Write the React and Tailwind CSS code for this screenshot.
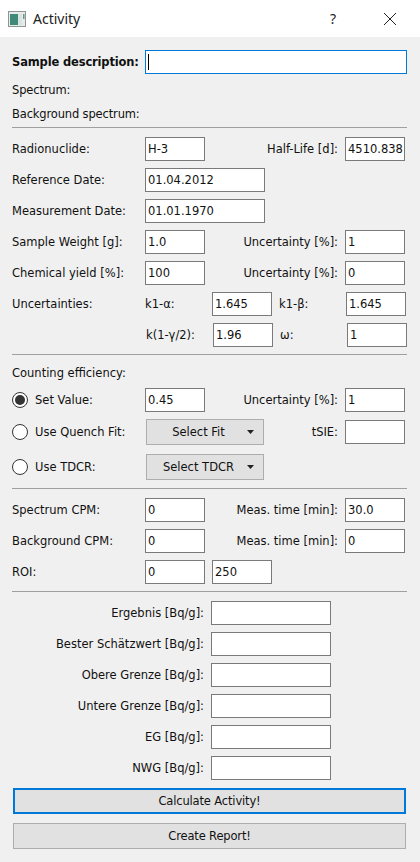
const font = { fontFamily: '"DejaVu Sans", sans-serif' };

function Field({ value = "", className = "w-[60px]", focus = false }) {
  return (
    <div className={`h-[24px] shrink-0 bg-white border flex items-center px-[2px] tracking-normal text-[#111] ${focus ? "border-[#0078d7]" : "border-[#7a7a7a] pt-[2px]"} ${className}`}>
      {value}
      {focus && <span className="w-px h-[16px] bg-black" />}
    </div>
  );
}

function Radio({ on }) {
  return (
    <span className="w-[16px] h-[16px] rounded-full border border-[#333] bg-white flex items-center justify-center shrink-0">
      {on && <span className="w-[10px] h-[10px] rounded-full bg-[#333]" />}
    </span>
  );
}

function Combo({ label }) {
  return (
    <div className="h-[26px] w-[118px] ml-[1px] shrink-0 bg-[#e1e1e1] border border-[#adadad] flex items-center">
      <span className="flex-1 text-center pl-[8px] pt-[2px]">{label}</span>
      <svg width="7" height="4" viewBox="0 0 7 4" className="mr-[9px] ml-[5px]"><path d="M0 0h7L3.5 4z" fill="#222" /></svg>
    </div>
  );
}

function Hr() {
  return <div className="h-px bg-[#a0a0a0] ml-[12px] mr-[13px]" />;
}

function Label({ children, className = "w-[133px]" }) {
  return <span className={`shrink-0 pt-[2px] ${className}`}>{children}</span>;
}

function PairRow({ label, value, right, rightValue }) {
  return (
    <div className="flex items-center h-[24px]">
      <Label>{label}</Label>
      <Field value={value} />
      <Label className="w-[140px] text-right pr-[7px]">{right}</Label>
      <Field value={rightValue} />
    </div>
  );
}

function ResultRow({ label }) {
  return (
    <div className="flex items-center h-[24px]">
      <Label className="w-[192px] text-right">{label}</Label>
      <Field className="w-[120px] ml-[7px]" />
    </div>
  );
}

export default function App() {
  return (
    <div style={font} className="w-[420px] h-[862px] bg-[#f0f0f0] text-[11.5px] text-[#111] overflow-hidden flex flex-col">
      <header className="h-[37px] bg-white flex items-center shrink-0">
        <svg width="18" height="16" viewBox="0 0 18 16" className="ml-[8px]">
          <rect x="0.5" y="0.5" width="17" height="15" fill="#e8eaea" stroke="#8f9696" />
          <rect x="2" y="3" width="8" height="11" fill="#3f8a78" />
          <rect x="10" y="3" width="4" height="11" fill="#dbe3e0" />
          <rect x="15" y="3" width="1.5" height="5" fill="#5f9a8c" />
        </svg>
        <span className="ml-[7px] text-[14px] text-[#222]" style={{ fontFamily: '"Noto Sans", sans-serif' }}>Activity</span>
        <span className="ml-auto text-[14px] text-[#222]" style={{ fontFamily: '"Noto Sans", sans-serif' }}>?</span>
        <svg width="14" height="14" viewBox="0 0 14 14" className="ml-[47px] mr-[23px]">
          <path d="M1 1l12 12M13 1L1 13" stroke="#222" strokeWidth="1" fill="none" />
        </svg>
      </header>

      <main className="flex flex-col pt-[13px]">
        <section className="pl-[12px] flex flex-col tracking-[-0.15px]">
          <div className="flex items-center h-[24px]">
            <Label className="w-[133px] font-bold whitespace-nowrap">Sample description:</Label>
            <Field focus className="w-[262px]" />
          </div>
          <div className="mt-[7px] h-[17px] flex items-center pt-[2px]">Spectrum:</div>
          <div className="mt-[7px] h-[17px] flex items-center pt-[2px]">Background spectrum:</div>
        </section>
        <div className="mt-[5px]"><Hr /></div>

        <section className="pl-[12px] pt-[9px] flex flex-col gap-[7px]">
          <PairRow label="Radionuclide:" value="H-3" right="Half-Life [d]:" rightValue="4510.838" />
          <div className="flex items-center h-[24px]"><Label>Reference Date:</Label><Field value="01.04.2012" className="w-[120px]" /></div>
          <div className="flex items-center h-[24px]"><Label>Measurement Date:</Label><Field value="01.01.1970" className="w-[120px]" /></div>
          <PairRow label="Sample Weight [g]:" value="1.0" right="Uncertainty [%]:" rightValue="1" />
          <PairRow label="Chemical yield [%]:" value="100" right="Uncertainty [%]:" rightValue="0" />
          <div className="flex items-center h-[24px]">
            <Label>Uncertainties:</Label>
            <Label className="w-[67px]">k1-α:</Label>
            <Field value="1.645" />
            <Label className="w-[74px] pl-[7px]">k1-β:</Label>
            <Field value="1.645" />
          </div>
          <div className="flex items-center h-[24px]">
            <Label>{""}</Label>
            <Label className="w-[68px] pl-[1px] whitespace-nowrap">k(1-γ/2):</Label>
            <Field value="1.96" />
            <Label className="w-[74px] pl-[7px]">ω:</Label>
            <Field value="1" />
          </div>
        </section>
        <div className="mt-[7px]"><Hr /></div>

        <section className="pl-[12px] flex flex-col">
          <div className="mt-[9px] h-[17px] flex items-center pt-[2px]">Counting efficiency:</div>
          <div className="mt-[7px] flex items-center h-[24px]">
            <Radio on />
            <Label className="w-[117px] pl-[7px]">Set Value:</Label>
            <Field value="0.45" />
            <Label className="w-[140px] text-right pr-[7px]">Uncertainty [%]:</Label>
            <Field value="1" />
          </div>
          <div className="mt-[7px] flex items-center h-[26px]">
            <Radio />
            <Label className="w-[117px] pl-[7px]">Use Quench Fit:</Label>
            <Combo label="Select Fit" />
            <Label className="w-[81px] text-right pr-[7px]">tSIE:</Label>
            <Field />
          </div>
          <div className="mt-[9px] flex items-center h-[26px]">
            <Radio />
            <Label className="w-[117px] pl-[7px]">Use TDCR:</Label>
            <Combo label="Select TDCR" />
          </div>
        </section>
        <div className="mt-[8px]"><Hr /></div>

        <section className="pl-[12px] pt-[9px] flex flex-col gap-[7px]">
          <PairRow label="Spectrum CPM:" value="0" right="Meas. time [min]:" rightValue="30.0" />
          <PairRow label="Background CPM:" value="0" right="Meas. time [min]:" rightValue="0" />
          <div className="flex items-center h-[24px] gap-[7px]">
            <Label className="w-[126px]">ROI:</Label>
            <Field value="0" />
            <Field value="250" />
          </div>
        </section>
        <div className="mt-[7px]"><Hr /></div>

        <section className="pl-[12px] pt-[9px] flex flex-col gap-[7px]">
          <ResultRow label="Ergebnis [Bq/g]:" />
          <ResultRow label="Bester Schätzwert [Bq/g]:" />
          <ResultRow label="Obere Grenze [Bq/g]:" />
          <ResultRow label="Untere Grenze [Bq/g]:" />
          <ResultRow label="EG [Bq/g]:" />
          <ResultRow label="NWG [Bq/g]:" />
        </section>

        <section className="px-[13px] pt-[8px] flex flex-col gap-[9px] tracking-[-0.15px]">
          <button className="h-[26px] w-[393px] bg-[#e1e1e1] border-2 border-[#0078d7] flex items-center justify-center pt-[1px]">Calculate Activity!</button>
          <button className="h-[26px] w-[393px] bg-[#e1e1e1] border border-[#adadad] flex items-center justify-center pt-[1px]">Create Report!</button>
        </section>
      </main>
    </div>
  );
}
